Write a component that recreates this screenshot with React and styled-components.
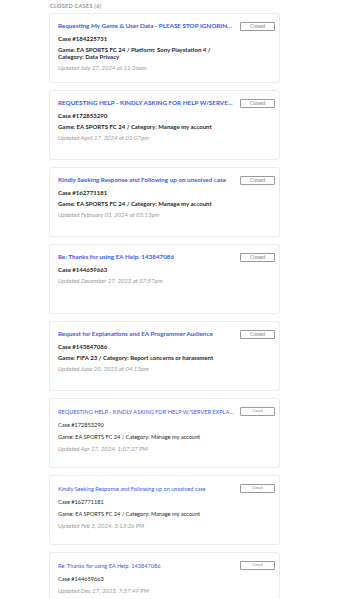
import styled, { createGlobalStyle } from 'styled-components';

const GlobalStyle = createGlobalStyle`
  html, body {
    margin: 0;
    padding: 0;
    background: #ffffff;
  }
  body {
    font-family: Lato, "Noto Sans", sans-serif;
  }
`;

const Page = styled.div`
  width: 231px;
  padding: 3px 0 0 49px;
`;

const SectionTitle = styled.div`
  font-size: 5.5px;
  font-weight: 600;
  color: #8a8a8a;
  letter-spacing: 0.3px;
  text-transform: uppercase;
  height: 10px;
  line-height: 7px;
  padding-left: 1px;
`;

const List = styled.div`
  display: flex;
  flex-direction: column;
  gap: 7px;
`;

const Card = styled.div`
  box-sizing: border-box;
  height: 70px;
  border: 1px solid #ececec;
  border-radius: 3px;
  background: #fff;
  box-shadow: 0 0 1px rgba(0, 0, 0, 0.04);
  padding: ${(p) => (p.$legacy ? '9px 4px 0 8px' : '8px 4px 0 8px')};
  display: flex;
  flex-direction: column;
  gap: ${(p) => (p.$legacy ? '5px' : '4px')};
`;

const TitleRow = styled.div`
  display: flex;
  align-items: flex-start;
  justify-content: space-between;
  gap: 4px;
`;

const Subject = styled.a`
  flex: 1;
  min-width: 0;
  font-size: ${(p) => (p.$legacy ? '5.6px' : '6.3px')};
  line-height: 7px;
  font-weight: ${(p) => (p.$legacy ? 400 : 700)};
  color: #3a5be6;
  white-space: nowrap;
  overflow: hidden;
  text-overflow: ellipsis;
  text-decoration: none;
`;

const Status = styled.span`
  flex: none;
  box-sizing: border-box;
  width: 35px;
  height: 9px;
  border: 1px solid #9a9a9a;
  border-radius: 1px;
  font-size: ${(p) => (p.$legacy ? '3.5px' : '5px')};
  line-height: 7px;
  color: #888;
  text-align: center;
  margin-top: ${(p) => (p.$legacy ? '-1px' : '0')};
`;

const CaseNo = styled.div`
  font-size: ${(p) => (p.$legacy ? '5.6px' : '6px')};
  line-height: 7px;
  font-weight: ${(p) => (p.$legacy ? 400 : 700)};
  color: #1f1f1f;
`;

const Meta = styled.div`
  font-size: ${(p) => (p.$legacy ? '5.6px' : '6px')};
  line-height: 7px;
  font-weight: ${(p) => (p.$legacy ? 400 : 700)};
  color: #1f1f1f;
  padding-right: 40px;
`;

const Updated = styled.div`
  font-size: 6px;
  line-height: 7px;
  font-style: italic;
  color: #9b9b9b;
`;

const cases = [
  {
    subject: 'Requesting My Game & User Data - PLEASE STOP IGNORING MY REQUEST',
    number: '184225731',
    meta: 'Game: EA SPORTS FC 24 / Platform: Sony Playstation 4 / Category: Data Privacy',
    updated: 'Updated July 27, 2024 at 11:36am',
  },
  {
    subject: 'REQUESTING HELP - KINDLY ASKING FOR HELP W/SERVER EXPLANATION',
    number: '172853290',
    meta: 'Game: EA SPORTS FC 24 / Category: Manage my account',
    updated: 'Updated April 17, 2024 at 01:07pm',
  },
  {
    subject: 'Kindly Seeking Response and Following up on unsolved case',
    number: '162771181',
    meta: 'Game: EA SPORTS FC 24 / Category: Manage my account',
    updated: 'Updated February 03, 2024 at 03:13pm',
  },
  {
    subject: 'Re: Thanks for using EA Help. 143847086',
    number: '144659663',
    updated: 'Updated December 27, 2023 at 07:57pm',
  },
  {
    subject: 'Request for Explanations and EA Programmer Audience',
    number: '143847086',
    meta: 'Game: FIFA 23 / Category: Report concerns or harassment',
    updated: 'Updated June 20, 2023 at 04:13pm',
  },
  {
    subject: 'REQUESTING HELP - KINDLY ASKING FOR HELP W/SERVER EXPLANATION',
    number: '172853290',
    meta: 'Game: EA SPORTS FC 24 / Category: Manage my account',
    updated: 'Updated Apr 17, 2024, 1:07:27 PM',
    legacy: true,
  },
  {
    subject: 'Kindly Seeking Response and Following up on unsolved case',
    number: '162771181',
    meta: 'Game: EA SPORTS FC 24 / Category: Manage my account',
    updated: 'Updated Feb 3, 2024, 3:13:26 PM',
    legacy: true,
  },
  {
    subject: 'Re: Thanks for using EA Help. 143847086',
    number: '144659663',
    updated: 'Updated Dec 27, 2023, 7:57:49 PM',
    legacy: true,
  },
];

const App = () => {
  return (
    <Page>
      <GlobalStyle />
      <SectionTitle>Closed Cases (6)</SectionTitle>
      <List>
        {cases.map((c, i) => (
          <Card key={i} $legacy={c.legacy}>
            <TitleRow>
              <Subject href="#" $legacy={c.legacy}>{c.subject}</Subject>
              <Status $legacy={c.legacy}>Closed</Status>
            </TitleRow>
            <CaseNo $legacy={c.legacy}>Case #{c.number}</CaseNo>
            {c.meta && <Meta $legacy={c.legacy}>{c.meta}</Meta>}
            <Updated>{c.updated}</Updated>
          </Card>
        ))}
      </List>
    </Page>
  );
};

export default App;
